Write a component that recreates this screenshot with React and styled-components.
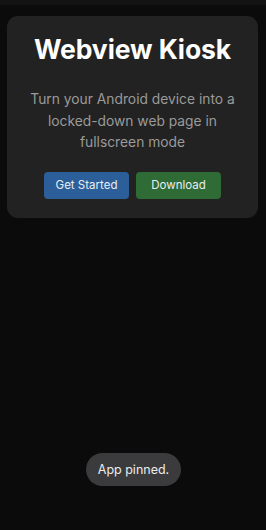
import React from "react";
import styled, { createGlobalStyle } from "styled-components";

const Global = createGlobalStyle`
  html, body { margin: 0; padding: 0; background: #0b0b0b; }
  body { font-family: Inter, "Noto Sans", sans-serif; }
`;

const Screen = styled.div`
  width: 266px;
  height: 530px;
  background: #0b0b0b;
  display: flex;
  flex-direction: column;
  position: relative;
  overflow: hidden;
`;

const StatusBar = styled.div`
  height: 5px;
  background: #131313;
`;

const Content = styled.div`
  padding: 11px 8px 0 7px;
`;

const Card = styled.div`
  background: #222222;
  border-radius: 11px;
  padding: 18px 10px 19px;
  display: flex;
  flex-direction: column;
  align-items: center;
  text-align: center;
`;

const Title = styled.h1`
  margin: 0;
  font-size: 26.5px;
  font-weight: 700;
  color: #ffffff;
  line-height: 30px;
  letter-spacing: -0.1px;
`;

const Subtitle = styled.p`
  margin: 25px 0 0;
  font-size: 13.8px;
  line-height: 21.5px;
  color: #9a9a9a;
`;

const Buttons = styled.div`
  display: flex;
  gap: 7px;
  margin-top: 18px;
`;

const Button = styled.button`
  width: 85px;
  height: 27px;
  border: none;
  border-radius: 4px;
  background: ${(p) => p.$bg};
  color: #e8eef3;
  font-family: Inter, "Noto Sans", sans-serif;
  font-size: 11.5px;
  padding: 0;
`;

const Toast = styled.div`
  position: absolute;
  left: 86px;
  top: 453px;
  width: 95px;
  height: 33px;
  border-radius: 17px;
  background: #3b3b3d;
  color: #ececec;
  font-size: 12.5px;
  display: flex;
  align-items: center;
  justify-content: center;
`;

export default function App() {
  return (
    <>
      <Global />
      <Screen>
        <StatusBar />
        <Content>
          <Card>
            <Title>Webview Kiosk</Title>
            <Subtitle>Turn your Android device into a locked-down web page in fullscreen mode</Subtitle>
            <Buttons>
              <Button $bg="#2c5f99">Get Started</Button>
              <Button $bg="#2e6b35">Download</Button>
            </Buttons>
          </Card>
        </Content>
        <Toast>App pinned.</Toast>
      </Screen>
    </>
  );
}
